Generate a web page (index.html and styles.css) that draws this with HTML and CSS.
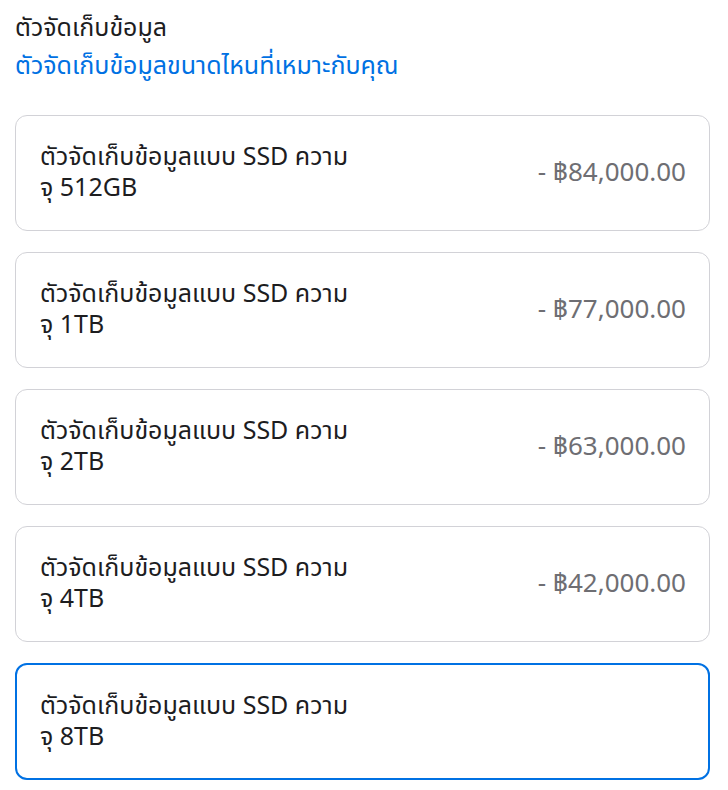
FILE: index.html
```html
<!DOCTYPE html>
<html lang="th">
<head>
  <meta charset="UTF-8" />
  <meta name="viewport" content="width=device-width, initial-scale=1.0"/>
  <title>ตัวจัดเก็บข้อมูล</title>
  <link rel="stylesheet" href="styles.css">
</head>
<body>
  <div class="storage">
    <div class="storage-header">
      <h2>ตัวจัดเก็บข้อมูล</h2>
      <a href="#" class="help-link">ตัวจัดเก็บข้อมูลขนาดไหนที่เหมาะกับคุณ</a>
    </div>

    <div class="options">
      <label class="option">
        <span class="option-name">ตัวจัดเก็บข้อมูลแบบ SSD ความจุ 512GB</span>
        <span class="option-price">- ฿84,000.00</span>
      </label>
      <label class="option">
        <span class="option-name">ตัวจัดเก็บข้อมูลแบบ SSD ความจุ 1TB</span>
        <span class="option-price">- ฿77,000.00</span>
      </label>
      <label class="option">
        <span class="option-name">ตัวจัดเก็บข้อมูลแบบ SSD ความจุ 2TB</span>
        <span class="option-price">- ฿63,000.00</span>
      </label>
      <label class="option">
        <span class="option-name">ตัวจัดเก็บข้อมูลแบบ SSD ความจุ 4TB</span>
        <span class="option-price">- ฿42,000.00</span>
      </label>
      <label class="option selected">
        <span class="option-name">ตัวจัดเก็บข้อมูลแบบ SSD ความจุ 8TB</span>
        <span class="option-price"></span>
      </label>
    </div>
  </div>
</body>
</html>
```

FILE: styles.css
```css
body {
  margin: 0;
  padding: 10px 18px 0 15px;
  background: #fff;
  font-family: "Noto Sans Thai", "Noto Sans", Inter, sans-serif;
  color: #1d1d1f;
}
.storage-header {
  margin-bottom: 30px;
}
.storage-header h2 {
  margin: 0;
  font-size: 25px;
  font-weight: 400;
  line-height: 37px;
  color: #1d1d1f;
}
.help-link {
  display: block;
  font-size: 25px;
  line-height: 38px;
  color: #0071e3;
  text-decoration: none;
}
.options {
  display: flex;
  flex-direction: column;
  gap: 21px;
}
.option {
  display: flex;
  align-items: center;
  justify-content: space-between;
  height: 116px;
  box-sizing: border-box;
  padding: 0 23px 0 24px;
  border: 1px solid #d2d2d7;
  border-radius: 12px;
  cursor: pointer;
}
.option.selected {
  height: 117px;
  border: 2px solid #0071e3;
  padding: 0 22px 0 23px;
}
.option-name {
  width: 318px;
  font-size: 25px;
  line-height: 31px;
  font-weight: 400;
}
.option-price {
  font-size: 26px;
  color: #6e6e73;
}
```
